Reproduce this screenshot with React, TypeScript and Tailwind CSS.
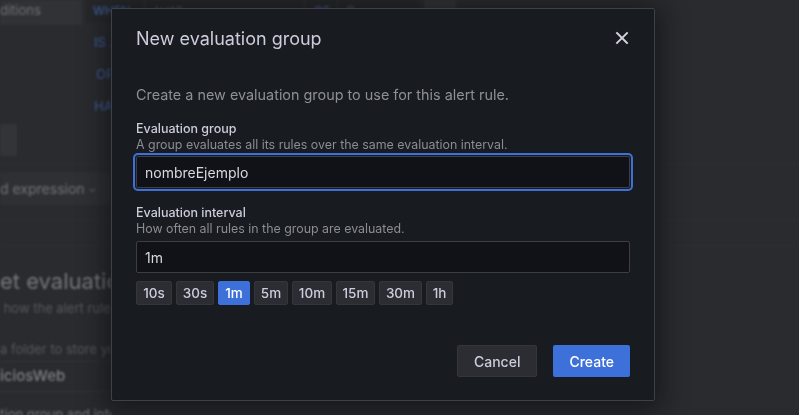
import React from 'react';

const intervals = [
  { label: '10s', width: 'w-[36px]' },
  { label: '30s', width: 'w-[38px]' },
  { label: '1m', width: 'w-[32px]' },
  { label: '5m', width: 'w-[34px]' },
  { label: '10m', width: 'w-[40px]' },
  { label: '15m', width: 'w-[39px]' },
  { label: '30m', width: 'w-[43px]' },
  { label: '1h', width: 'w-[27px]' },
];
const selectedInterval = '1m';

function CloseIcon() {
  return (
    <svg width="16" height="16" viewBox="0 0 16 16" fill="none" stroke="#d4d4e0" strokeWidth="1.9" strokeLinecap="square">
      <path d="M3 3 L13 13 M13 3 L3 13" />
    </svg>
  );
}

// the blurred rule editor behind the modal, only the strip left of the modal shows
function PageBehind() {
  return (
    <div className="flex flex-col blur-[1.2px] select-none">
      <div className="flex h-[25px]">
        <div className="w-[82px] bg-[#313236] flex items-center pb-[4px] text-[13px] text-[#6c6d72]">ditions</div>
        <div className="ml-[4px] flex bg-[#262729] h-[22px]">
          <div className="w-[59px] pl-[7px] flex items-center text-[12px] font-medium text-[#3e5a95] border-r border-[#34353a]">WHEN</div>
          <div className="w-[160px] pl-[10px] flex items-center text-[12px] text-[#5f6066] border-r border-[#34353a]">last()</div>
          <div className="w-[33px] pl-[9px] flex items-center text-[12px] font-medium text-[#3e5a95] border-r border-[#34353a]">OF</div>
          <div className="w-[80px] pl-[8px] flex items-center text-[12px] text-[#5f6066]">C</div>
        </div>
        <div className="ml-[6px] w-[32px] h-[9px] bg-[#333438]" />
      </div>
      <div className="ml-[94px] w-[17px] overflow-hidden flex flex-col text-[13px] font-medium text-[#3e5a95] whitespace-nowrap">
        <span className="mt-[9px] leading-[16px]">IS A</span>
        <span className="mt-[16px] leading-[16px] ml-[2px]">OR</span>
        <span className="mt-[16px] leading-[16px]">HA</span>
      </div>
      <div className="mt-[10px] w-[17px] h-[32px] bg-[#333438] rounded-r-[2px]" />
      <div className="mt-[7px] h-px bg-[#303135]" />
      <div className="mt-[8px] w-[111px] h-[33px] bg-[#2f3034] flex items-center gap-[4px] text-[14px] text-[#6e6f74]">
        <span>d expression</span>
        <span className="text-[10px]">&#8964;</span>
      </div>
      <div className="mt-[15px] h-px bg-[#303135]" />
      <div className="mt-[24px] h-px bg-[#303135]" />
      <div className="w-[111px] overflow-hidden flex flex-col whitespace-nowrap">
        <div className="mt-[21px] text-[22px] leading-[28px] text-[#75767b]">et evaluation</div>
        <div className="mt-[5px] text-[13px] leading-[16px] text-[#56575c]">&nbsp;how the alert rule is</div>
        <div className="mt-[25px] text-[13px] leading-[16px] text-[#56575c]">a folder to store your</div>
        <div className="mt-[4px] h-[31px] border-y border-[#34353a] flex items-center text-[15px] font-medium text-[#7e7f84]">iciosWeb</div>
        <div className="mt-[14px] text-[13px] font-medium leading-[16px] text-[#66676c]">tion group and interval</div>
      </div>
    </div>
  );
}

function Field({ label, description, children, className }: { label: string; description: string; children: React.ReactNode; className?: string }) {
  return (
    <div className={className}>
      <div className="text-[12.5px] leading-[15px] font-medium text-[#ccccdc]">{label}</div>
      <div className="text-[12.4px] leading-[18px] text-[#8b8c94]">{description}</div>
      {children}
    </div>
  );
}

export default function App() {
  return (
    <div className="relative w-[799px] h-[415px] overflow-hidden bg-[#2a2b2e] font-['Inter',sans-serif]">
      <PageBehind />

      <div className="absolute left-[111px] top-[8px] w-[544px] h-[393px] flex flex-col bg-[#181b1f] border border-[#404146] rounded-[2px] shadow-[0_4px_26px_6px_rgba(8,9,11,0.55)]">
        <div className="h-[60px] px-6 flex items-center justify-between">
          <h2 className="text-[18px] leading-[22px] text-[#ccccdc]">New evaluation group</h2>
          <button className="-mt-[3px]"><CloseIcon /></button>
        </div>

        <div className="px-6 flex flex-col">
          <p className="mt-[15px] text-[14.4px] leading-[21px] text-[#8e8f97]">
            Create a new evaluation group to use for this alert rule.
          </p>

          <Field
            className="mt-[16px]"
            label="Evaluation group"
            description="A group evaluates all its rules over the same evaluation interval."
          >
            <input
              readOnly
              value="nombreEjemplo"
              className="mt-[2px] w-full h-8 px-2 bg-[#111217] border border-[#3d3e44] rounded-[2px] text-[14px] text-[#d8d8e2] outline-none shadow-[0_0_0_1px_#181b1f,0_0_0_3px_#3d71d9]"
            />
          </Field>

          <Field
            className="mt-[17px]"
            label="Evaluation interval"
            description="How often all rules in the group are evaluated."
          >
            <input
              readOnly
              value="1m"
              className="mt-[3px] w-full h-8 px-2 bg-[#111217] border border-[#3d3e44] rounded-[2px] text-[14px] text-[#d8d8e2] outline-none"
            />
          </Field>

          <div className="mt-[8px] flex gap-1">
            {intervals.map((iv) =>
              iv.label === selectedInterval ? (
                <button key={iv.label} className={`${iv.width} h-6 flex items-center justify-center rounded-[2px] bg-[#3d71d9] border border-[#3d71d9] text-[13.5px] font-medium text-white`}>
                  {iv.label}
                </button>
              ) : (
                <button key={iv.label} className={`${iv.width} h-6 flex items-center justify-center rounded-[2px] bg-[#2b2d32] border border-[#35363b] text-[13.5px] font-medium text-[#ccccdc]`}>
                  {iv.label}
                </button>
              )
            )}
          </div>

          <div className="mt-[40px] flex justify-end gap-4">
            <button className="h-8 px-4 rounded-[2px] bg-[#2b2d32] border border-[#35363b] text-[14px] font-medium text-[#ccccdc]">
              Cancel
            </button>
            <button className="h-8 px-4 rounded-[2px] bg-[#3d71d9] text-[14px] font-medium text-white">
              Create
            </button>
          </div>
        </div>
      </div>
    </div>
  );
}
